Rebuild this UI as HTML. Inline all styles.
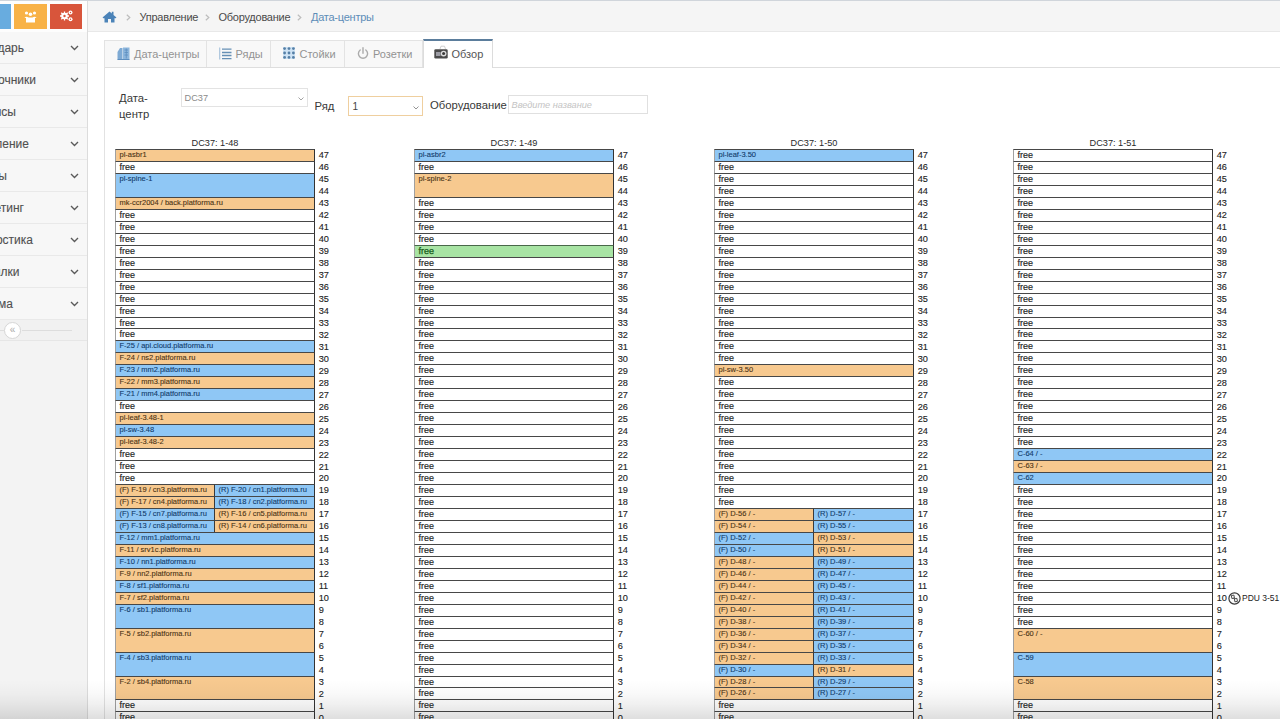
<!DOCTYPE html>
<html><head><meta charset="utf-8"><title>Обзор</title><style>
*{margin:0;padding:0;box-sizing:border-box}
html,body{width:1280px;height:719px;overflow:hidden;background:#fff}
body{font-family:"Liberation Sans",sans-serif;color:#333;position:relative}
#pg{position:absolute;left:0;top:0;width:1280px;height:719px;overflow:hidden}
.abs{position:absolute}
/* sidebar */
#sb{position:absolute;left:0;top:0;width:88px;height:719px;background:#f3f3f3;border-right:1px solid #dcdcdc;overflow:hidden}
#sbtop{position:absolute;left:0;top:0;width:87px;height:32px;background:#fdfdfd}
.btn{position:absolute;top:4px;height:25px}
.mi{position:absolute;left:0;width:87px;height:32px;background:#f7f7f7;border-bottom:1px solid #e9e9e9}
.mi span{position:absolute;top:8px;white-space:nowrap;font-size:12px;color:#505050;line-height:16px;-webkit-text-stroke:0.1px #505050}
.chev{position:absolute;left:70px;top:13px;width:9px;height:6px}
#coll{position:absolute;left:0;top:320px;width:87px;height:21px;background:#f1f1f1;border-bottom:1px solid #e6e6e6}
/* breadcrumb */
#bc{position:absolute;left:88px;top:0;width:1192px;height:32px;background:#f5f5f5;border-bottom:1px solid #e8e8e8}
#bc .t{position:absolute;top:10px;font-size:11px;line-height:14px;color:#4a4a4a;white-space:nowrap;letter-spacing:-0.25px}
#bc .sep{position:absolute;top:10px;font-size:11px;line-height:14px;color:#c8c8c8}
/* tabs */
#tabline{position:absolute;left:104.5px;top:66.5px;width:1180px;height:1px;background:#dedede}
#pnl{position:absolute;left:104px;top:67px;width:1px;height:660px;background:#e2e2e2}
.tab{position:absolute;top:40px;height:27px;background:#f8f8f8;border:1px solid #e3e3e3;border-bottom:none}
.tab .tx{position:absolute;top:6px;font-size:11px;line-height:14px;color:#939393;white-space:nowrap}
.tab.act{top:39px;height:28.5px;background:#fff;border-top:2px solid #5b7d9c;border-left:1px solid #dcdcdc;border-right:1px solid #dcdcdc}
.tab.act .tx{color:#555;top:6px}
/* form */
.lbl{position:absolute;font-size:11.3px;line-height:14px;color:#383838;white-space:nowrap}
.sel{position:absolute;background:#fff;border:1px solid #e3e3e3}
/* racks */
.rt{position:absolute;top:137px;height:12px;text-align:center;font-size:9.2px;line-height:12px;color:#2a2a2a;white-space:nowrap}
.r{position:absolute;border:1px solid #474747;border-right-color:#333;border-left-color:#a0a0a0;overflow:hidden;white-space:nowrap}
.r.d.rh{border-left-color:#3a3a3a}
.r.f{background:#fff;font-size:9px;line-height:10px;padding-left:3.5px;color:#1a1a1a;-webkit-text-stroke:0.15px #1a1a1a}
.r.gr{background:#a8e4a4;color:#145a18;-webkit-text-stroke:0.25px #145a18;border-top-color:#4a684a;border-bottom-color:#4a684a}
.r.d{font-size:7.5px;line-height:8px;-webkit-text-stroke:0.1px currentColor;padding-left:3.5px;padding-top:0.7px}
.r.o{background:#f7c98f;color:#4a3214}
.r.b{background:#8fc7f5;color:#0f3a6a}
.n{position:absolute;height:12px;font-size:9.2px;line-height:12px;color:#222;-webkit-text-stroke:0.12px #222}
#shade{position:absolute;left:0;top:680px;width:1280px;height:39px;background:linear-gradient(to bottom,rgba(0,0,0,0) 0%,rgba(0,0,0,0.025) 35%,rgba(0,0,0,0.06) 62%,rgba(0,0,0,0.13) 100%);pointer-events:none}

</style></head><body><div id="pg">
<div id="sb">
  <div id="sbtop"></div>
  <div class="btn" style="left:-21px;width:32px;background:#68acdf"></div>
  <div class="btn" style="left:14px;width:32.5px;background:#f8b247"><svg class="abs" style="left:10px;top:5.5px" width="13" height="13" viewBox="0 0 13 13"><g fill="#fff"><circle cx="2.5" cy="3" r="1.6"/><circle cx="10.5" cy="3" r="1.6"/><circle cx="6.5" cy="4.2" r="1.8"/><path d="M0.5 8 Q2.5 5.5 4.5 8 Z M8.5 8 Q10.5 5.5 12.5 8 Z"/><path d="M2 7.5 H11 V12.5 H2 Z"/></g></svg></div>
  <div class="btn" style="left:50px;width:32px;background:#d8553b"><svg class="abs" style="left:10px;top:6px" width="13" height="12" viewBox="0 0 13 12"><g fill="#fff"><circle cx="4.5" cy="6" r="3.3"/><circle cx="10.5" cy="2.5" r="2"/><circle cx="10.5" cy="9.3" r="2"/></g><g fill="none" stroke="#fff" stroke-width="1.3"><path d="M4.5 1.5 V10.5 M0 6 H9 M1.3 2.8 L7.7 9.2 M1.3 9.2 L7.7 2.8"/></g><circle cx="4.5" cy="6" r="1.2" fill="#d8553b"/><circle cx="10.5" cy="2.5" r="0.7" fill="#d8553b"/><circle cx="10.5" cy="9.3" r="0.7" fill="#d8553b"/></svg></div>
  <div class="mi" style="top:32px"><span style="right:63px">Календарь</span><svg class="chev" viewBox="0 0 9 6"><path d="M1 1 L4.5 4.5 L8 1" fill="none" stroke="#5a5a5a" stroke-width="1.35"/></svg></div>
  <div class="mi" style="top:64px"><span style="right:51px">Справочники</span><svg class="chev" viewBox="0 0 9 6"><path d="M1 1 L4.5 4.5 L8 1" fill="none" stroke="#5a5a5a" stroke-width="1.35"/></svg></div>
  <div class="mi" style="top:96px"><span style="right:71px">Финансы</span><svg class="chev" viewBox="0 0 9 6"><path d="M1 1 L4.5 4.5 L8 1" fill="none" stroke="#5a5a5a" stroke-width="1.35"/></svg></div>
  <div class="mi" style="top:128px"><span style="right:58px">Управление</span><svg class="chev" viewBox="0 0 9 6"><path d="M1 1 L4.5 4.5 L8 1" fill="none" stroke="#5a5a5a" stroke-width="1.35"/></svg></div>
  <div class="mi" style="top:160px"><span style="right:80px">Отчеты</span><svg class="chev" viewBox="0 0 9 6"><path d="M1 1 L4.5 4.5 L8 1" fill="none" stroke="#5a5a5a" stroke-width="1.35"/></svg></div>
  <div class="mi" style="top:192px"><span style="right:63px">Маркетинг</span><svg class="chev" viewBox="0 0 9 6"><path d="M1 1 L4.5 4.5 L8 1" fill="none" stroke="#5a5a5a" stroke-width="1.35"/></svg></div>
  <div class="mi" style="top:224px"><span style="right:54px">Диагностика</span><svg class="chev" viewBox="0 0 9 6"><path d="M1 1 L4.5 4.5 L8 1" fill="none" stroke="#5a5a5a" stroke-width="1.35"/></svg></div>
  <div class="mi" style="top:256px"><span style="right:67.5px">Рассылки</span><svg class="chev" viewBox="0 0 9 6"><path d="M1 1 L4.5 4.5 L8 1" fill="none" stroke="#5a5a5a" stroke-width="1.35"/></svg></div>
  <div class="mi" style="top:288px"><span style="right:74px">Система</span><svg class="chev" viewBox="0 0 9 6"><path d="M1 1 L4.5 4.5 L8 1" fill="none" stroke="#5a5a5a" stroke-width="1.35"/></svg></div>
  <div id="coll">
    <div class="abs" style="left:0;top:10px;width:4px;height:1px;background:#ddd"></div>
    <div class="abs" style="left:22px;top:10px;width:50px;height:1px;background:#ddd"></div>
    <div class="abs" style="left:4px;top:2px;width:17px;height:17px;border-radius:50%;background:#fff;border:1px solid #d6d6d6;font-size:10px;line-height:14px;text-align:center;color:#aaa">«</div>
  </div>
</div>
<div id="bc">
  <svg class="abs" style="left:14px;top:11px" width="15" height="12" viewBox="0 0 15 12"><path d="M7.5 0.5 L0.5 6.5 L2 7.5 L2.5 7 L2.5 11.5 L6 11.5 L6 8 L9 8 L9 11.5 L12.5 11.5 L12.5 7 L13 7.5 L14.5 6.5 L11.5 3.9 L11.5 0.8 L9.8 0.8 L9.8 2.4 Z" fill="#4b83b8"/></svg>
  <svg class="abs" style="left:38px;top:13.5px" width="5" height="7" viewBox="0 0 5 7"><path d="M0.8 0.8 L3.8 3.5 L0.8 6.2" fill="none" stroke="#bdbdbd" stroke-width="1.2"/></svg>
  <span class="t" style="left:51.5px">Управление</span>
  <svg class="abs" style="left:117px;top:13.5px" width="5" height="7" viewBox="0 0 5 7"><path d="M0.8 0.8 L3.8 3.5 L0.8 6.2" fill="none" stroke="#bdbdbd" stroke-width="1.2"/></svg>
  <span class="t" style="left:130.5px">Оборудование</span>
  <svg class="abs" style="left:209px;top:13.5px" width="5" height="7" viewBox="0 0 5 7"><path d="M0.8 0.8 L3.8 3.5 L0.8 6.2" fill="none" stroke="#bdbdbd" stroke-width="1.2"/></svg>
  <span class="t" style="left:223px;color:#5d8db8">Дата-центры</span>
</div>
<div id="tabline"></div>
<div id="pnl"></div>
<div class="tab" style="left:104px;width:102.5px">
  <svg class="abs" style="left:11.5px;top:5.5px" width="13" height="13" viewBox="0 0 13 13"><path d="M0.5 12.5 L0.5 5 L3 1 L5.5 1 L5.5 12.5 Z" fill="#7eaad4"/><path d="M6 0.5 H12.5 V12.5 H6 Z" fill="#8db6dc"/><path d="M7.5 3 H11 M7.5 5.5 H11 M7.5 8 H11 M9.25 1.5 V11.5" stroke="#5d8ebf" stroke-width="0.8"/><path d="M0.5 12.5 H12.5" stroke="#5d8ebf" stroke-width="1"/></svg>
  <span class="tx" style="left:29px">Дата-центры</span>
</div>
<div class="tab" style="left:206px;width:64.5px">
  <svg class="abs" style="left:11.5px;top:6px" width="13" height="13" viewBox="0 0 13 13"><path d="M0.7 0.5 V12.5" stroke="#a9c4dc" stroke-width="1.2"/><path d="M3 2.2 H12.5 M3 5.5 H12.5 M3 8.5 H12.5 M3 11.7 H12.5" fill="none" stroke="#6690b5" stroke-width="1.3"/></svg>
  <span class="tx" style="left:28.5px">Ряды</span>
</div>
<div class="tab" style="left:270px;width:74.5px">
  <svg class="abs" style="left:11.8px;top:6.3px" width="12" height="12" viewBox="0 0 12 12"><rect x="0" y="0" width="12" height="12" fill="#cfe3f4"/><g fill="#557fa6"><circle cx="1.6" cy="1.6" r="1.4"/><circle cx="6" cy="1.6" r="1.4"/><circle cx="10.4" cy="1.6" r="1.4"/><circle cx="1.6" cy="6" r="1.4"/><circle cx="6" cy="6" r="1.4"/><circle cx="10.4" cy="6" r="1.4"/><circle cx="1.6" cy="10.4" r="1.4"/><circle cx="6" cy="10.4" r="1.4"/><circle cx="10.4" cy="10.4" r="1.4"/></g></svg>
  <span class="tx" style="left:28.5px">Стойки</span>
</div>
<div class="tab" style="left:344px;width:78.5px">
  <svg class="abs" style="left:11.5px;top:6px" width="12" height="13" viewBox="0 0 12 13"><path d="M6 0.8 V6.2 M3.2 3 A4.6 4.6 0 1 0 8.8 3" fill="none" stroke="#ababab" stroke-width="1.4" stroke-linecap="round"/></svg>
  <span class="tx" style="left:28px">Розетки</span>
</div>
<div class="tab act" style="left:422.5px;width:70px">
  <svg class="abs" style="left:10.5px;top:4px" width="14" height="14" viewBox="0 0 14 14"><path d="M6 4 L7 1.2 H10.5 L11.5 4" fill="none" stroke="#c4c4c4" stroke-width="0.8"/><rect x="0.3" y="4.3" width="13.4" height="9.2" rx="1.3" fill="#4a4a4a"/><rect x="2" y="7" width="4.5" height="4" fill="#9c9ca4"/><circle cx="9.6" cy="8.6" r="2.9" fill="#dedede"/><circle cx="9.6" cy="8.6" r="1.5" fill="#3a3a3a"/></svg>
  <span class="tx" style="left:28px">Обзор</span>
</div>
<!-- form -->
<div class="lbl" style="left:119px;top:90.5px">Дата-</div>
<div class="lbl" style="left:119px;top:107.2px">центр</div>
<div class="sel" style="left:180.5px;top:87.5px;width:127px;height:19.5px">
  <span class="abs" style="left:3px;top:3px;font-size:9.2px;line-height:12px;color:#8a8a8a">DC37</span>
  <svg class="abs" style="left:116.5px;top:8px" width="6" height="4" viewBox="0 0 6 4"><path d="M0.5 0.5 L3 3 L5.5 0.5" fill="none" stroke="#999" stroke-width="0.9"/></svg>
</div>
<div class="lbl" style="left:314.5px;top:99px">Ряд</div>
<div class="sel" style="left:348px;top:96px;width:75px;height:19.5px;border-color:#efcf9f">
  <span class="abs" style="left:3.5px;top:4px;font-size:10px;line-height:12px;color:#444">1</span>
  <svg class="abs" style="left:63.5px;top:8.5px" width="6" height="4" viewBox="0 0 6 4"><path d="M0.5 0.5 L3 3 L5.5 0.5" fill="none" stroke="#888" stroke-width="0.9"/></svg>
</div>
<div class="lbl" style="left:430px;top:98px">Оборудование</div>
<div class="sel" style="left:507.5px;top:94.5px;width:140px;height:19.5px;border-color:#e0e0e0">
  <span class="abs" style="left:3px;top:3px;font-size:9.2px;line-height:12px;color:#c4c4c4;font-style:italic">Введите название</span>
</div>
<!-- PDU -->
<svg class="abs" style="left:1227.5px;top:591.5px" width="13" height="13" viewBox="0 0 13 13"><circle cx="6.5" cy="6.5" r="5.6" fill="#fafafa" stroke="#3a3a3a" stroke-width="1.2"/><g fill="none" stroke="#444" stroke-width="0.9"><rect x="3.6" y="3.3" width="2.6" height="3" transform="rotate(-10 4.9 4.8)"/><rect x="6.6" y="6.6" width="2.6" height="3" transform="rotate(-10 7.9 8.1)"/><path d="M5.4 6.3 L7 6.9"/></g></svg>
<div class="abs" style="left:1242px;top:592px;font-size:8.5px;line-height:12px;color:#222;white-space:nowrap">PDU 3-51</div>
<div class="abs" style="left:0;top:0;width:1280px;height:1px;background:#d0d5db"></div>

<div class="rt" style="left:115px;width:200px">DC37: 1-48</div>
<div class="r d o" style="left:115px;top:149px;width:200px;height:13px">pl-asbr1</div>
<div class="r f" style="left:115px;top:161px;width:200px;height:13px">free</div>
<div class="r d b" style="left:115px;top:173px;width:200px;height:25px">pl-spine-1</div>
<div class="r d o" style="left:115px;top:197px;width:200px;height:13px">mk-ccr2004 / back.platforma.ru</div>
<div class="r f" style="left:115px;top:209px;width:200px;height:13px">free</div>
<div class="r f" style="left:115px;top:221px;width:200px;height:13px">free</div>
<div class="r f" style="left:115px;top:233px;width:200px;height:13px">free</div>
<div class="r f" style="left:115px;top:245px;width:200px;height:13px">free</div>
<div class="r f" style="left:115px;top:257px;width:200px;height:13px">free</div>
<div class="r f" style="left:115px;top:269px;width:200px;height:13px">free</div>
<div class="r f" style="left:115px;top:281px;width:200px;height:13px">free</div>
<div class="r f" style="left:115px;top:293px;width:200px;height:13px">free</div>
<div class="r f" style="left:115px;top:305px;width:200px;height:13px">free</div>
<div class="r f" style="left:115px;top:317px;width:200px;height:12px">free</div>
<div class="r f" style="left:115px;top:328px;width:200px;height:13px">free</div>
<div class="r d b" style="left:115px;top:340px;width:200px;height:13px">F-25 / api.cloud.platforma.ru</div>
<div class="r d o" style="left:115px;top:352px;width:200px;height:13px">F-24 / ns2.platforma.ru</div>
<div class="r d b" style="left:115px;top:364px;width:200px;height:13px">F-23 / mm2.platforma.ru</div>
<div class="r d o" style="left:115px;top:376px;width:200px;height:13px">F-22 / mm3.platforma.ru</div>
<div class="r d b" style="left:115px;top:388px;width:200px;height:13px">F-21 / mm4.platforma.ru</div>
<div class="r f" style="left:115px;top:400px;width:200px;height:13px">free</div>
<div class="r d o" style="left:115px;top:412px;width:200px;height:13px">pl-leaf-3.48-1</div>
<div class="r d b" style="left:115px;top:424px;width:200px;height:13px">pl-sw-3.48</div>
<div class="r d o" style="left:115px;top:436px;width:200px;height:13px">pl-leaf-3.48-2</div>
<div class="r f" style="left:115px;top:448px;width:200px;height:13px">free</div>
<div class="r f" style="left:115px;top:460px;width:200px;height:13px">free</div>
<div class="r f" style="left:115px;top:472px;width:200px;height:13px">free</div>
<div class="r d o" style="left:115px;top:484px;width:100px;height:13px">(F) F-19 / cn3.platforma.ru</div>
<div class="r d rh b" style="left:214px;top:484px;width:101px;height:13px">(R) F-20 / cn1.platforma.ru</div>
<div class="r d o" style="left:115px;top:496px;width:100px;height:13px">(F) F-17 / cn4.platforma.ru</div>
<div class="r d rh b" style="left:214px;top:496px;width:101px;height:13px">(R) F-18 / cn2.platforma.ru</div>
<div class="r d b" style="left:115px;top:508px;width:100px;height:13px">(F) F-15 / cn7.platforma.ru</div>
<div class="r d rh o" style="left:214px;top:508px;width:101px;height:13px">(R) F-16 / cn5.platforma.ru</div>
<div class="r d b" style="left:115px;top:520px;width:100px;height:13px">(F) F-13 / cn8.platforma.ru</div>
<div class="r d rh o" style="left:214px;top:520px;width:101px;height:13px">(R) F-14 / cn6.platforma.ru</div>
<div class="r d b" style="left:115px;top:532px;width:200px;height:13px">F-12 / mm1.platforma.ru</div>
<div class="r d o" style="left:115px;top:544px;width:200px;height:13px">F-11 / srv1c.platforma.ru</div>
<div class="r d b" style="left:115px;top:556px;width:200px;height:13px">F-10 / nn1.platforma.ru</div>
<div class="r d o" style="left:115px;top:568px;width:200px;height:13px">F-9 / nn2.platforma.ru</div>
<div class="r d b" style="left:115px;top:580px;width:200px;height:13px">F-8 / sf1.platforma.ru</div>
<div class="r d o" style="left:115px;top:592px;width:200px;height:13px">F-7 / sf2.platforma.ru</div>
<div class="r d b" style="left:115px;top:604px;width:200px;height:25px">F-6 / sb1.platforma.ru</div>
<div class="r d o" style="left:115px;top:628px;width:200px;height:25px">F-5 / sb2.platforma.ru</div>
<div class="r d b" style="left:115px;top:652px;width:200px;height:25px">F-4 / sb3.platforma.ru</div>
<div class="r d o" style="left:115px;top:676px;width:200px;height:24px">F-2 / sb4.platforma.ru</div>
<div class="r f" style="left:115px;top:699px;width:200px;height:13px">free</div>
<div class="r f" style="left:115px;top:711px;width:200px;height:13px">free</div>
<div class="n" style="left:318.7px;top:149.4px">47</div>
<div class="n" style="left:318.7px;top:161.37px">46</div>
<div class="n" style="left:318.7px;top:173.33px">45</div>
<div class="n" style="left:318.7px;top:185.3px">44</div>
<div class="n" style="left:318.7px;top:197.26px">43</div>
<div class="n" style="left:318.7px;top:209.23px">42</div>
<div class="n" style="left:318.7px;top:221.2px">41</div>
<div class="n" style="left:318.7px;top:233.16px">40</div>
<div class="n" style="left:318.7px;top:245.13px">39</div>
<div class="n" style="left:318.7px;top:257.09px">38</div>
<div class="n" style="left:318.7px;top:269.06px">37</div>
<div class="n" style="left:318.7px;top:281.03px">36</div>
<div class="n" style="left:318.7px;top:292.99px">35</div>
<div class="n" style="left:318.7px;top:304.96px">34</div>
<div class="n" style="left:318.7px;top:316.92px">33</div>
<div class="n" style="left:318.7px;top:328.89px">32</div>
<div class="n" style="left:318.7px;top:340.86px">31</div>
<div class="n" style="left:318.7px;top:352.82px">30</div>
<div class="n" style="left:318.7px;top:364.79px">29</div>
<div class="n" style="left:318.7px;top:376.75px">28</div>
<div class="n" style="left:318.7px;top:388.72px">27</div>
<div class="n" style="left:318.7px;top:400.69px">26</div>
<div class="n" style="left:318.7px;top:412.65px">25</div>
<div class="n" style="left:318.7px;top:424.62px">24</div>
<div class="n" style="left:318.7px;top:436.58px">23</div>
<div class="n" style="left:318.7px;top:448.55px">22</div>
<div class="n" style="left:318.7px;top:460.52px">21</div>
<div class="n" style="left:318.7px;top:472.48px">20</div>
<div class="n" style="left:318.7px;top:484.45px">19</div>
<div class="n" style="left:318.7px;top:496.41px">18</div>
<div class="n" style="left:318.7px;top:508.38px">17</div>
<div class="n" style="left:318.7px;top:520.35px">16</div>
<div class="n" style="left:318.7px;top:532.31px">15</div>
<div class="n" style="left:318.7px;top:544.28px">14</div>
<div class="n" style="left:318.7px;top:556.24px">13</div>
<div class="n" style="left:318.7px;top:568.21px">12</div>
<div class="n" style="left:318.7px;top:580.18px">11</div>
<div class="n" style="left:318.7px;top:592.14px">10</div>
<div class="n" style="left:318.7px;top:604.11px">9</div>
<div class="n" style="left:318.7px;top:616.07px">8</div>
<div class="n" style="left:318.7px;top:628.04px">7</div>
<div class="n" style="left:318.7px;top:640.01px">6</div>
<div class="n" style="left:318.7px;top:651.97px">5</div>
<div class="n" style="left:318.7px;top:663.94px">4</div>
<div class="n" style="left:318.7px;top:675.9px">3</div>
<div class="n" style="left:318.7px;top:687.87px">2</div>
<div class="n" style="left:318.7px;top:699.84px">1</div>
<div class="n" style="left:318.7px;top:711.8px">0</div>
<div class="rt" style="left:414px;width:200px">DC37: 1-49</div>
<div class="r d b" style="left:414px;top:149px;width:200px;height:13px">pl-asbr2</div>
<div class="r f" style="left:414px;top:161px;width:200px;height:13px">free</div>
<div class="r d o" style="left:414px;top:173px;width:200px;height:25px">pl-spine-2</div>
<div class="r f" style="left:414px;top:197px;width:200px;height:13px">free</div>
<div class="r f" style="left:414px;top:209px;width:200px;height:13px">free</div>
<div class="r f" style="left:414px;top:221px;width:200px;height:13px">free</div>
<div class="r f" style="left:414px;top:233px;width:200px;height:13px">free</div>
<div class="r f gr" style="left:414px;top:245px;width:200px;height:13px">free</div>
<div class="r f" style="left:414px;top:257px;width:200px;height:13px">free</div>
<div class="r f" style="left:414px;top:269px;width:200px;height:13px">free</div>
<div class="r f" style="left:414px;top:281px;width:200px;height:13px">free</div>
<div class="r f" style="left:414px;top:293px;width:200px;height:13px">free</div>
<div class="r f" style="left:414px;top:305px;width:200px;height:13px">free</div>
<div class="r f" style="left:414px;top:317px;width:200px;height:12px">free</div>
<div class="r f" style="left:414px;top:328px;width:200px;height:13px">free</div>
<div class="r f" style="left:414px;top:340px;width:200px;height:13px">free</div>
<div class="r f" style="left:414px;top:352px;width:200px;height:13px">free</div>
<div class="r f" style="left:414px;top:364px;width:200px;height:13px">free</div>
<div class="r f" style="left:414px;top:376px;width:200px;height:13px">free</div>
<div class="r f" style="left:414px;top:388px;width:200px;height:13px">free</div>
<div class="r f" style="left:414px;top:400px;width:200px;height:13px">free</div>
<div class="r f" style="left:414px;top:412px;width:200px;height:13px">free</div>
<div class="r f" style="left:414px;top:424px;width:200px;height:13px">free</div>
<div class="r f" style="left:414px;top:436px;width:200px;height:13px">free</div>
<div class="r f" style="left:414px;top:448px;width:200px;height:13px">free</div>
<div class="r f" style="left:414px;top:460px;width:200px;height:13px">free</div>
<div class="r f" style="left:414px;top:472px;width:200px;height:13px">free</div>
<div class="r f" style="left:414px;top:484px;width:200px;height:13px">free</div>
<div class="r f" style="left:414px;top:496px;width:200px;height:13px">free</div>
<div class="r f" style="left:414px;top:508px;width:200px;height:13px">free</div>
<div class="r f" style="left:414px;top:520px;width:200px;height:13px">free</div>
<div class="r f" style="left:414px;top:532px;width:200px;height:13px">free</div>
<div class="r f" style="left:414px;top:544px;width:200px;height:13px">free</div>
<div class="r f" style="left:414px;top:556px;width:200px;height:13px">free</div>
<div class="r f" style="left:414px;top:568px;width:200px;height:13px">free</div>
<div class="r f" style="left:414px;top:580px;width:200px;height:13px">free</div>
<div class="r f" style="left:414px;top:592px;width:200px;height:13px">free</div>
<div class="r f" style="left:414px;top:604px;width:200px;height:13px">free</div>
<div class="r f" style="left:414px;top:616px;width:200px;height:13px">free</div>
<div class="r f" style="left:414px;top:628px;width:200px;height:13px">free</div>
<div class="r f" style="left:414px;top:640px;width:200px;height:13px">free</div>
<div class="r f" style="left:414px;top:652px;width:200px;height:13px">free</div>
<div class="r f" style="left:414px;top:664px;width:200px;height:13px">free</div>
<div class="r f" style="left:414px;top:676px;width:200px;height:12px">free</div>
<div class="r f" style="left:414px;top:687px;width:200px;height:13px">free</div>
<div class="r f" style="left:414px;top:699px;width:200px;height:13px">free</div>
<div class="r f" style="left:414px;top:711px;width:200px;height:13px">free</div>
<div class="n" style="left:617.7px;top:149.4px">47</div>
<div class="n" style="left:617.7px;top:161.37px">46</div>
<div class="n" style="left:617.7px;top:173.33px">45</div>
<div class="n" style="left:617.7px;top:185.3px">44</div>
<div class="n" style="left:617.7px;top:197.26px">43</div>
<div class="n" style="left:617.7px;top:209.23px">42</div>
<div class="n" style="left:617.7px;top:221.2px">41</div>
<div class="n" style="left:617.7px;top:233.16px">40</div>
<div class="n" style="left:617.7px;top:245.13px">39</div>
<div class="n" style="left:617.7px;top:257.09px">38</div>
<div class="n" style="left:617.7px;top:269.06px">37</div>
<div class="n" style="left:617.7px;top:281.03px">36</div>
<div class="n" style="left:617.7px;top:292.99px">35</div>
<div class="n" style="left:617.7px;top:304.96px">34</div>
<div class="n" style="left:617.7px;top:316.92px">33</div>
<div class="n" style="left:617.7px;top:328.89px">32</div>
<div class="n" style="left:617.7px;top:340.86px">31</div>
<div class="n" style="left:617.7px;top:352.82px">30</div>
<div class="n" style="left:617.7px;top:364.79px">29</div>
<div class="n" style="left:617.7px;top:376.75px">28</div>
<div class="n" style="left:617.7px;top:388.72px">27</div>
<div class="n" style="left:617.7px;top:400.69px">26</div>
<div class="n" style="left:617.7px;top:412.65px">25</div>
<div class="n" style="left:617.7px;top:424.62px">24</div>
<div class="n" style="left:617.7px;top:436.58px">23</div>
<div class="n" style="left:617.7px;top:448.55px">22</div>
<div class="n" style="left:617.7px;top:460.52px">21</div>
<div class="n" style="left:617.7px;top:472.48px">20</div>
<div class="n" style="left:617.7px;top:484.45px">19</div>
<div class="n" style="left:617.7px;top:496.41px">18</div>
<div class="n" style="left:617.7px;top:508.38px">17</div>
<div class="n" style="left:617.7px;top:520.35px">16</div>
<div class="n" style="left:617.7px;top:532.31px">15</div>
<div class="n" style="left:617.7px;top:544.28px">14</div>
<div class="n" style="left:617.7px;top:556.24px">13</div>
<div class="n" style="left:617.7px;top:568.21px">12</div>
<div class="n" style="left:617.7px;top:580.18px">11</div>
<div class="n" style="left:617.7px;top:592.14px">10</div>
<div class="n" style="left:617.7px;top:604.11px">9</div>
<div class="n" style="left:617.7px;top:616.07px">8</div>
<div class="n" style="left:617.7px;top:628.04px">7</div>
<div class="n" style="left:617.7px;top:640.01px">6</div>
<div class="n" style="left:617.7px;top:651.97px">5</div>
<div class="n" style="left:617.7px;top:663.94px">4</div>
<div class="n" style="left:617.7px;top:675.9px">3</div>
<div class="n" style="left:617.7px;top:687.87px">2</div>
<div class="n" style="left:617.7px;top:699.84px">1</div>
<div class="n" style="left:617.7px;top:711.8px">0</div>
<div class="rt" style="left:714px;width:200px">DC37: 1-50</div>
<div class="r d b" style="left:714px;top:149px;width:200px;height:13px">pl-leaf-3.50</div>
<div class="r f" style="left:714px;top:161px;width:200px;height:13px">free</div>
<div class="r f" style="left:714px;top:173px;width:200px;height:13px">free</div>
<div class="r f" style="left:714px;top:185px;width:200px;height:13px">free</div>
<div class="r f" style="left:714px;top:197px;width:200px;height:13px">free</div>
<div class="r f" style="left:714px;top:209px;width:200px;height:13px">free</div>
<div class="r f" style="left:714px;top:221px;width:200px;height:13px">free</div>
<div class="r f" style="left:714px;top:233px;width:200px;height:13px">free</div>
<div class="r f" style="left:714px;top:245px;width:200px;height:13px">free</div>
<div class="r f" style="left:714px;top:257px;width:200px;height:13px">free</div>
<div class="r f" style="left:714px;top:269px;width:200px;height:13px">free</div>
<div class="r f" style="left:714px;top:281px;width:200px;height:13px">free</div>
<div class="r f" style="left:714px;top:293px;width:200px;height:13px">free</div>
<div class="r f" style="left:714px;top:305px;width:200px;height:13px">free</div>
<div class="r f" style="left:714px;top:317px;width:200px;height:12px">free</div>
<div class="r f" style="left:714px;top:328px;width:200px;height:13px">free</div>
<div class="r f" style="left:714px;top:340px;width:200px;height:13px">free</div>
<div class="r f" style="left:714px;top:352px;width:200px;height:13px">free</div>
<div class="r d o" style="left:714px;top:364px;width:200px;height:13px">pl-sw-3.50</div>
<div class="r f" style="left:714px;top:376px;width:200px;height:13px">free</div>
<div class="r f" style="left:714px;top:388px;width:200px;height:13px">free</div>
<div class="r f" style="left:714px;top:400px;width:200px;height:13px">free</div>
<div class="r f" style="left:714px;top:412px;width:200px;height:13px">free</div>
<div class="r f" style="left:714px;top:424px;width:200px;height:13px">free</div>
<div class="r f" style="left:714px;top:436px;width:200px;height:13px">free</div>
<div class="r f" style="left:714px;top:448px;width:200px;height:13px">free</div>
<div class="r f" style="left:714px;top:460px;width:200px;height:13px">free</div>
<div class="r f" style="left:714px;top:472px;width:200px;height:13px">free</div>
<div class="r f" style="left:714px;top:484px;width:200px;height:13px">free</div>
<div class="r f" style="left:714px;top:496px;width:200px;height:13px">free</div>
<div class="r d o" style="left:714px;top:508px;width:100px;height:13px">(F) D-56 / -</div>
<div class="r d rh b" style="left:813px;top:508px;width:101px;height:13px">(R) D-57 / -</div>
<div class="r d o" style="left:714px;top:520px;width:100px;height:13px">(F) D-54 / -</div>
<div class="r d rh b" style="left:813px;top:520px;width:101px;height:13px">(R) D-55 / -</div>
<div class="r d b" style="left:714px;top:532px;width:100px;height:13px">(F) D-52 / -</div>
<div class="r d rh o" style="left:813px;top:532px;width:101px;height:13px">(R) D-53 / -</div>
<div class="r d b" style="left:714px;top:544px;width:100px;height:13px">(F) D-50 / -</div>
<div class="r d rh o" style="left:813px;top:544px;width:101px;height:13px">(R) D-51 / -</div>
<div class="r d o" style="left:714px;top:556px;width:100px;height:13px">(F) D-48 / -</div>
<div class="r d rh b" style="left:813px;top:556px;width:101px;height:13px">(R) D-49 / -</div>
<div class="r d o" style="left:714px;top:568px;width:100px;height:13px">(F) D-46 / -</div>
<div class="r d rh b" style="left:813px;top:568px;width:101px;height:13px">(R) D-47 / -</div>
<div class="r d o" style="left:714px;top:580px;width:100px;height:13px">(F) D-44 / -</div>
<div class="r d rh b" style="left:813px;top:580px;width:101px;height:13px">(R) D-45 / -</div>
<div class="r d o" style="left:714px;top:592px;width:100px;height:13px">(F) D-42 / -</div>
<div class="r d rh b" style="left:813px;top:592px;width:101px;height:13px">(R) D-43 / -</div>
<div class="r d o" style="left:714px;top:604px;width:100px;height:13px">(F) D-40 / -</div>
<div class="r d rh b" style="left:813px;top:604px;width:101px;height:13px">(R) D-41 / -</div>
<div class="r d o" style="left:714px;top:616px;width:100px;height:13px">(F) D-38 / -</div>
<div class="r d rh b" style="left:813px;top:616px;width:101px;height:13px">(R) D-39 / -</div>
<div class="r d o" style="left:714px;top:628px;width:100px;height:13px">(F) D-36 / -</div>
<div class="r d rh b" style="left:813px;top:628px;width:101px;height:13px">(R) D-37 / -</div>
<div class="r d o" style="left:714px;top:640px;width:100px;height:13px">(F) D-34 / -</div>
<div class="r d rh b" style="left:813px;top:640px;width:101px;height:13px">(R) D-35 / -</div>
<div class="r d o" style="left:714px;top:652px;width:100px;height:13px">(F) D-32 / -</div>
<div class="r d rh b" style="left:813px;top:652px;width:101px;height:13px">(R) D-33 / -</div>
<div class="r d b" style="left:714px;top:664px;width:100px;height:13px">(F) D-30 / -</div>
<div class="r d rh o" style="left:813px;top:664px;width:101px;height:13px">(R) D-31 / -</div>
<div class="r d o" style="left:714px;top:676px;width:100px;height:12px">(F) D-28 / -</div>
<div class="r d rh b" style="left:813px;top:676px;width:101px;height:12px">(R) D-29 / -</div>
<div class="r d o" style="left:714px;top:687px;width:100px;height:13px">(F) D-26 / -</div>
<div class="r d rh b" style="left:813px;top:687px;width:101px;height:13px">(R) D-27 / -</div>
<div class="r f" style="left:714px;top:699px;width:200px;height:13px">free</div>
<div class="r f" style="left:714px;top:711px;width:200px;height:13px">free</div>
<div class="n" style="left:917.7px;top:149.4px">47</div>
<div class="n" style="left:917.7px;top:161.37px">46</div>
<div class="n" style="left:917.7px;top:173.33px">45</div>
<div class="n" style="left:917.7px;top:185.3px">44</div>
<div class="n" style="left:917.7px;top:197.26px">43</div>
<div class="n" style="left:917.7px;top:209.23px">42</div>
<div class="n" style="left:917.7px;top:221.2px">41</div>
<div class="n" style="left:917.7px;top:233.16px">40</div>
<div class="n" style="left:917.7px;top:245.13px">39</div>
<div class="n" style="left:917.7px;top:257.09px">38</div>
<div class="n" style="left:917.7px;top:269.06px">37</div>
<div class="n" style="left:917.7px;top:281.03px">36</div>
<div class="n" style="left:917.7px;top:292.99px">35</div>
<div class="n" style="left:917.7px;top:304.96px">34</div>
<div class="n" style="left:917.7px;top:316.92px">33</div>
<div class="n" style="left:917.7px;top:328.89px">32</div>
<div class="n" style="left:917.7px;top:340.86px">31</div>
<div class="n" style="left:917.7px;top:352.82px">30</div>
<div class="n" style="left:917.7px;top:364.79px">29</div>
<div class="n" style="left:917.7px;top:376.75px">28</div>
<div class="n" style="left:917.7px;top:388.72px">27</div>
<div class="n" style="left:917.7px;top:400.69px">26</div>
<div class="n" style="left:917.7px;top:412.65px">25</div>
<div class="n" style="left:917.7px;top:424.62px">24</div>
<div class="n" style="left:917.7px;top:436.58px">23</div>
<div class="n" style="left:917.7px;top:448.55px">22</div>
<div class="n" style="left:917.7px;top:460.52px">21</div>
<div class="n" style="left:917.7px;top:472.48px">20</div>
<div class="n" style="left:917.7px;top:484.45px">19</div>
<div class="n" style="left:917.7px;top:496.41px">18</div>
<div class="n" style="left:917.7px;top:508.38px">17</div>
<div class="n" style="left:917.7px;top:520.35px">16</div>
<div class="n" style="left:917.7px;top:532.31px">15</div>
<div class="n" style="left:917.7px;top:544.28px">14</div>
<div class="n" style="left:917.7px;top:556.24px">13</div>
<div class="n" style="left:917.7px;top:568.21px">12</div>
<div class="n" style="left:917.7px;top:580.18px">11</div>
<div class="n" style="left:917.7px;top:592.14px">10</div>
<div class="n" style="left:917.7px;top:604.11px">9</div>
<div class="n" style="left:917.7px;top:616.07px">8</div>
<div class="n" style="left:917.7px;top:628.04px">7</div>
<div class="n" style="left:917.7px;top:640.01px">6</div>
<div class="n" style="left:917.7px;top:651.97px">5</div>
<div class="n" style="left:917.7px;top:663.94px">4</div>
<div class="n" style="left:917.7px;top:675.9px">3</div>
<div class="n" style="left:917.7px;top:687.87px">2</div>
<div class="n" style="left:917.7px;top:699.84px">1</div>
<div class="n" style="left:917.7px;top:711.8px">0</div>
<div class="rt" style="left:1013px;width:200px">DC37: 1-51</div>
<div class="r f" style="left:1013px;top:149px;width:200px;height:13px">free</div>
<div class="r f" style="left:1013px;top:161px;width:200px;height:13px">free</div>
<div class="r f" style="left:1013px;top:173px;width:200px;height:13px">free</div>
<div class="r f" style="left:1013px;top:185px;width:200px;height:13px">free</div>
<div class="r f" style="left:1013px;top:197px;width:200px;height:13px">free</div>
<div class="r f" style="left:1013px;top:209px;width:200px;height:13px">free</div>
<div class="r f" style="left:1013px;top:221px;width:200px;height:13px">free</div>
<div class="r f" style="left:1013px;top:233px;width:200px;height:13px">free</div>
<div class="r f" style="left:1013px;top:245px;width:200px;height:13px">free</div>
<div class="r f" style="left:1013px;top:257px;width:200px;height:13px">free</div>
<div class="r f" style="left:1013px;top:269px;width:200px;height:13px">free</div>
<div class="r f" style="left:1013px;top:281px;width:200px;height:13px">free</div>
<div class="r f" style="left:1013px;top:293px;width:200px;height:13px">free</div>
<div class="r f" style="left:1013px;top:305px;width:200px;height:13px">free</div>
<div class="r f" style="left:1013px;top:317px;width:200px;height:12px">free</div>
<div class="r f" style="left:1013px;top:328px;width:200px;height:13px">free</div>
<div class="r f" style="left:1013px;top:340px;width:200px;height:13px">free</div>
<div class="r f" style="left:1013px;top:352px;width:200px;height:13px">free</div>
<div class="r f" style="left:1013px;top:364px;width:200px;height:13px">free</div>
<div class="r f" style="left:1013px;top:376px;width:200px;height:13px">free</div>
<div class="r f" style="left:1013px;top:388px;width:200px;height:13px">free</div>
<div class="r f" style="left:1013px;top:400px;width:200px;height:13px">free</div>
<div class="r f" style="left:1013px;top:412px;width:200px;height:13px">free</div>
<div class="r f" style="left:1013px;top:424px;width:200px;height:13px">free</div>
<div class="r f" style="left:1013px;top:436px;width:200px;height:13px">free</div>
<div class="r d b" style="left:1013px;top:448px;width:200px;height:13px">C-64 / -</div>
<div class="r d o" style="left:1013px;top:460px;width:200px;height:13px">C-63 / -</div>
<div class="r d b" style="left:1013px;top:472px;width:200px;height:13px">C-62</div>
<div class="r f" style="left:1013px;top:484px;width:200px;height:13px">free</div>
<div class="r f" style="left:1013px;top:496px;width:200px;height:13px">free</div>
<div class="r f" style="left:1013px;top:508px;width:200px;height:13px">free</div>
<div class="r f" style="left:1013px;top:520px;width:200px;height:13px">free</div>
<div class="r f" style="left:1013px;top:532px;width:200px;height:13px">free</div>
<div class="r f" style="left:1013px;top:544px;width:200px;height:13px">free</div>
<div class="r f" style="left:1013px;top:556px;width:200px;height:13px">free</div>
<div class="r f" style="left:1013px;top:568px;width:200px;height:13px">free</div>
<div class="r f" style="left:1013px;top:580px;width:200px;height:13px">free</div>
<div class="r f" style="left:1013px;top:592px;width:200px;height:13px">free</div>
<div class="r f" style="left:1013px;top:604px;width:200px;height:13px">free</div>
<div class="r f" style="left:1013px;top:616px;width:200px;height:13px">free</div>
<div class="r d o" style="left:1013px;top:628px;width:200px;height:25px">C-60 / -</div>
<div class="r d b" style="left:1013px;top:652px;width:200px;height:25px">C-59</div>
<div class="r d o" style="left:1013px;top:676px;width:200px;height:24px">C-58</div>
<div class="r f" style="left:1013px;top:699px;width:200px;height:13px">free</div>
<div class="r f" style="left:1013px;top:711px;width:200px;height:13px">free</div>
<div class="n" style="left:1216.7px;top:149.4px">47</div>
<div class="n" style="left:1216.7px;top:161.37px">46</div>
<div class="n" style="left:1216.7px;top:173.33px">45</div>
<div class="n" style="left:1216.7px;top:185.3px">44</div>
<div class="n" style="left:1216.7px;top:197.26px">43</div>
<div class="n" style="left:1216.7px;top:209.23px">42</div>
<div class="n" style="left:1216.7px;top:221.2px">41</div>
<div class="n" style="left:1216.7px;top:233.16px">40</div>
<div class="n" style="left:1216.7px;top:245.13px">39</div>
<div class="n" style="left:1216.7px;top:257.09px">38</div>
<div class="n" style="left:1216.7px;top:269.06px">37</div>
<div class="n" style="left:1216.7px;top:281.03px">36</div>
<div class="n" style="left:1216.7px;top:292.99px">35</div>
<div class="n" style="left:1216.7px;top:304.96px">34</div>
<div class="n" style="left:1216.7px;top:316.92px">33</div>
<div class="n" style="left:1216.7px;top:328.89px">32</div>
<div class="n" style="left:1216.7px;top:340.86px">31</div>
<div class="n" style="left:1216.7px;top:352.82px">30</div>
<div class="n" style="left:1216.7px;top:364.79px">29</div>
<div class="n" style="left:1216.7px;top:376.75px">28</div>
<div class="n" style="left:1216.7px;top:388.72px">27</div>
<div class="n" style="left:1216.7px;top:400.69px">26</div>
<div class="n" style="left:1216.7px;top:412.65px">25</div>
<div class="n" style="left:1216.7px;top:424.62px">24</div>
<div class="n" style="left:1216.7px;top:436.58px">23</div>
<div class="n" style="left:1216.7px;top:448.55px">22</div>
<div class="n" style="left:1216.7px;top:460.52px">21</div>
<div class="n" style="left:1216.7px;top:472.48px">20</div>
<div class="n" style="left:1216.7px;top:484.45px">19</div>
<div class="n" style="left:1216.7px;top:496.41px">18</div>
<div class="n" style="left:1216.7px;top:508.38px">17</div>
<div class="n" style="left:1216.7px;top:520.35px">16</div>
<div class="n" style="left:1216.7px;top:532.31px">15</div>
<div class="n" style="left:1216.7px;top:544.28px">14</div>
<div class="n" style="left:1216.7px;top:556.24px">13</div>
<div class="n" style="left:1216.7px;top:568.21px">12</div>
<div class="n" style="left:1216.7px;top:580.18px">11</div>
<div class="n" style="left:1216.7px;top:592.14px">10</div>
<div class="n" style="left:1216.7px;top:604.11px">9</div>
<div class="n" style="left:1216.7px;top:616.07px">8</div>
<div class="n" style="left:1216.7px;top:628.04px">7</div>
<div class="n" style="left:1216.7px;top:640.01px">6</div>
<div class="n" style="left:1216.7px;top:651.97px">5</div>
<div class="n" style="left:1216.7px;top:663.94px">4</div>
<div class="n" style="left:1216.7px;top:675.9px">3</div>
<div class="n" style="left:1216.7px;top:687.87px">2</div>
<div class="n" style="left:1216.7px;top:699.84px">1</div>
<div class="n" style="left:1216.7px;top:711.8px">0</div>
<div id="shade"></div>
</div></body></html>
